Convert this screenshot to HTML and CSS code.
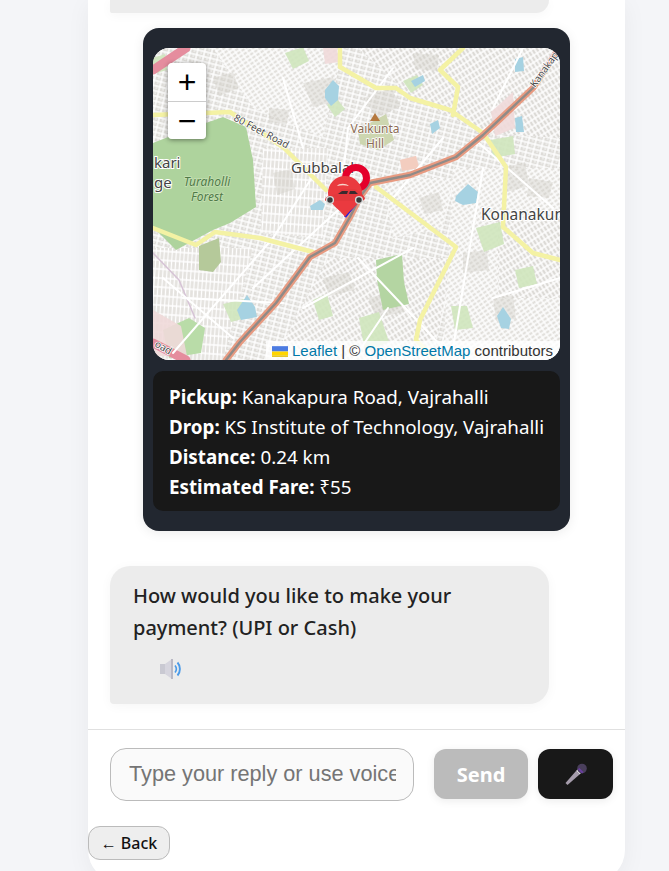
FILE: index.html
```html
<!DOCTYPE html>
<html lang="en">
<head>
<meta charset="utf-8">
<title>Ride booking chat</title>
<link rel="stylesheet" href="styles.css">
</head>
<body>
<main class="card">
  <section class="chat">
    <div class="bubble bubble-cut"></div>
    <div class="ride">
      <div class="map">
        <svg class="map-art" viewBox="0 0 407 312" width="407" height="312" aria-hidden="true">
          <defs>
            <pattern id="st1" width="7" height="5" patternUnits="userSpaceOnUse" patternTransform="rotate(14)">
              <rect width="7" height="5" fill="#dedcd8"/>
              <path d="M0 1H7M2 0V5" stroke="#fff" stroke-width="1.500"/>
              <path d="M5 3H7" stroke="#fff" stroke-width=".8"/>
            </pattern>
            <pattern id="st2" width="5" height="8" patternUnits="userSpaceOnUse" patternTransform="rotate(-34)">
              <rect width="5" height="8" fill="#e2e0dc"/>
              <path d="M0 2H5M1 0V8M0 6H5" stroke="#fff" stroke-width="1.400"/>
            </pattern>
            <pattern id="st3" width="6" height="4" patternUnits="userSpaceOnUse" patternTransform="rotate(58)">
              <rect width="6" height="4" fill="#dcdad6"/>
              <path d="M0 1H6M4 0V4" stroke="#fff" stroke-width="1.500"/>
            </pattern>
            <pattern id="st4" width="4" height="9" patternUnits="userSpaceOnUse" patternTransform="rotate(4)">
              <rect width="4" height="9" fill="#e4e2de"/>
              <path d="M0 4H4M1.500 0V9" stroke="#fff" stroke-width="1.300"/>
            </pattern>
            <filter id="soft"><feGaussianBlur stdDeviation="0.5"/></filter>
          </defs>
          <g filter="url(#soft)">
            <rect width="407" height="312" fill="url(#st1)"/>
            <path d="M0 0H190L170 90 100 60 60 0Z" fill="url(#st2)"/>
            <path d="M205 0H407V90L330 85 260 50Z" fill="url(#st3)"/>
            <path d="M175 210H300L280 312H120Z" fill="url(#st3)"/>
            <path d="M300 120H407V312H290Z" fill="url(#st2)"/>
            <path d="M0 200H100L70 312H0Z" fill="url(#st4)"/>
            <path d="M110 100H175L170 190 108 185Z" fill="url(#st4)"/>
            <path d="M345 170H407V250H345Z" fill="url(#st3)"/>
            <path d="M230 130H300L290 180 240 190Z" fill="url(#st2)"/>
            <g fill="#cfccc6" opacity=".4">
              <path d="M150 35l30-6 6 24-26 6zM210 50l28-10 10 18-24 12zM120 125l18-4 4 20-18 6zM350 120l22-6 4 24-22 6zM215 250l30-8 6 22-28 6zM310 205l24-3 2 20-26 3zM60 30l20-6 6 16-20 8zM340 250l20-3 3 24-20 2zM170 230l26-6 6 18-26 6zM260 5l26 2-2 16-22-2zM376 130l24 4-4 16-22-2zM116 60l20 2-2 14-18-2zM266 150l20-6 4 18-18 4z"/>
            </g>
            <g fill="#cfe6bd" opacity=".9">
              <path d="M132 5l18-6 6 14-16 8zM174 57l10-6 8 10-10 8zM250 33l14-6 6 10-12 8zM337 92l23-4 2 18-22 4zM323 180l24-6 4 22-20 8zM70 256l26-6 4 18-22 6zM206 270l20-6 10 30-24 10zM298 258l16 0 6 22-18 2zM160 252l14-6 6 22-14 4zM362 222l18-4 4 18-18 4zM0 10l12-4 2 16-14 4z"/>
            </g>
            <path d="M223 212l26-6 2 28 5 22-26 6-6-30z" fill="#b4d5a2"/>
            <path d="M10 282l26-12 16 10-4 25-32 5z" fill="#b9dca8"/>
            <path d="M46 198l20-8 2 24-8 10-14-2z" fill="#b5c99a"/>
            <path d="M205 82l28-16 8 26-16 10-18-6z" fill="#cdd6b0"/>
            <g fill="#efd9d9" opacity=".9"><path d="M170 0h14l2 14-14 2zM338 64l22-20 2 36-20 8zM247 112l16-4 4 12-18 3zM0 262l28 16 6 30-34 0z"/></g>
            <path d="M247 112l16-4 3 12-17 3z" fill="#f3cdbf"/>
            <path d="M0 95 33 82 70 69 93 79 100 112 103 159 77 175 60 182 23 202 0 179Z" fill="#aed39d"/>
            <g fill="#a6d2e2">
              <path d="M172 42l8-10 6 6-1 14-7 6-6-8zM303 148l12-12 10 8-2 11-13 2-8-4zM344 268l6-9 8 12-2 10-8-1zM84 262l10-15 8 12 2 10-16 3zM157 158l10-6 5 4-2 6-12 0zM362 11l8-2 1 14-9 1zM362 70l7-2 2 16-8 0zM258 33l12-6 2 6-10 6zM277 76l8-4 2 8-8 6z"/>
            </g>
            <g fill="none" stroke-linecap="round" stroke-linejoin="round">
              <path d="M0 22 33 0" stroke="#e58d9e" stroke-width="9"/>
              <path d="M0 295 33 312" stroke="#e58d9e" stroke-width="9"/>
              <path d="M0 205 26 232 42 270" stroke="#d6c3d6" stroke-width="1.500"/>
              <g stroke="#fff" stroke-width="2">
                <path d="M20 305 120 190 165 120M100 240 220 130M240 20 195 80 190 130M300 300 330 120M205 210 290 300M320 90 400 160M30 250 130 255M240 150 290 90M130 30 150 100M370 0 340 60M10 230 80 290M150 260 260 200M340 250 407 230M235 260 200 312"/>
              </g>
              <g stroke="#f4f2a4" stroke-width="4.500">
                <path d="M0 67 77 64 130 99 173 142"/>
                <path d="M223 139 303 199 267 272 263 292 283 312"/>
                <path d="M0 180 43 197 62 184 107 190 160 204"/>
                <path d="M187 0 187 19 223 40 243 40 257 50 297 62 330 85 353 119 350 179 380 205 407 212"/>
                <path d="M310 0 287 22 305 39 300 67"/>
              </g>
              <path d="M73 312 87 294 123 255 157 209 182 195 197 169 207 149 217 135 257 127 303 109 330 87 380 40 403 5" stroke="#e89a80" stroke-width="6.500"/>
              <path d="M73 312 87 294 123 255 157 209 182 195 197 169 207 149 217 135 257 127 303 109 330 87 380 40 392 24" stroke="#8f8b88" stroke-width="2.400"/>
            </g>
          </g>
          <g>
            <text x="1" y="120" class="l-town">kari</text>
            <text x="1" y="140" class="l-town">ge</text>
            <text x="138" y="125" class="l-town">Gubbalal</text>
            <text x="328" y="172" class="l-kona">Konanakun</text>
            <text x="222" y="85" class="l-hill" text-anchor="middle">Vaikunta</text>
            <text x="222" y="100" class="l-hill" text-anchor="middle">Hill</text>
            <path d="M222 65l5 8h-10z" fill="#b5793f"/>
            <text x="54" y="138" class="l-forest" text-anchor="middle">Turaholli</text>
            <text x="54" y="153" class="l-forest" text-anchor="middle">Forest</text>
            <text x="80" y="72" class="l-road" transform="rotate(28 80 72)">80 Feet Road</text>
            <text x="382" y="40" class="l-road" transform="rotate(-54 382 40)">Kanakap</text>
            <text x="1" y="298" class="l-road" transform="rotate(30 1 298)">oad</text>
          </g>
          <g>
            <circle cx="203" cy="130" r="10.500" fill="none" stroke="#e4002b" stroke-width="7"/>
            <path d="M192 169 203 155" fill="none" stroke="#1d1de0" stroke-width="2.500"/>
            <path d="M192 169C188 162 175 156 175 145a17 17 0 0 1 34 0C209 156 196 162 192 169Z" fill="#ea3a3f"/>
            <path d="M184 138c2-3 9-3 12 0-4-1-8-1-12 0z" fill="#f7d6cc"/>
            <path d="M172 152c0-3 4-5 12-6l5-5h12c4 1 6 3 8 5l3 4c0 2-2 3-4 3h-32c-3 0-4 0-4-1z" fill="#e3383c"/>
            <path d="M185 146l4-3h6l-1 3zM196 146l1-3h5l3 3z" fill="#3a2a2e"/>
            <circle cx="177" cy="152" r="3.400" fill="#3b3b3b" stroke="#d8d8d8" stroke-width="1.400"/>
            <circle cx="206" cy="152" r="3.400" fill="#3b3b3b" stroke="#d8d8d8" stroke-width="1.400"/>
          </g>
        </svg>
        <div class="zoom">
          <button class="zoom-btn" type="button">+</button>
          <button class="zoom-btn" type="button">−</button>
        </div>
        <div class="attribution">
          <svg class="flag" viewBox="0 0 12 8" width="16" height="11" aria-hidden="true"><rect width="12" height="4" fill="#4C7BE1"/><rect y="4" width="12" height="3" fill="#FFD500"/><rect y="7" width="12" height="1" fill="#E0BC00"/></svg>
          <a href="#">Leaflet</a> <span>|</span> © <a href="#">OpenStreetMap</a> contributors
        </div>
      </div>
      <div class="info">
        <p><b>Pickup:</b> Kanakapura Road, Vajrahalli</p>
        <p><b>Drop:</b> KS Institute of Technology, Vajrahalli</p>
        <p><b>Distance:</b> 0.24 km</p>
        <p><b>Estimated Fare:</b> ₹55</p>
      </div>
    </div>
    <div class="bubble">
      <p class="bubble-text">How would you like to make your payment? (UPI or Cash)</p>
      <svg class="speaker" viewBox="0 0 24 22" width="24" height="22" aria-hidden="true">
        <path d="M1 6h5v10H1z" fill="#c9c9d2"/>
        <path d="M6 6 13 1v20l-7-5z" fill="#d6d5de"/>
        <path d="M12 1h2v20h-2z" fill="#b9b8c4"/>
        <path d="M16 7.500c1.600 2 1.600 5 0 7" fill="none" stroke="#4a9ae8" stroke-width="1.600"/>
        <path d="M18.500 4.500c3.200 3.600 3.200 9.400 0 13" fill="none" stroke="#4a9ae8" stroke-width="1.900"/>
      </svg>
    </div>
  </section>
  <form class="composer">
    <input class="reply" type="text" placeholder="Type your reply or use voice">
    <button class="send" type="button">Send</button>
    <button class="mic" type="button" aria-label="Voice input">
      <svg viewBox="0 0 24 24" width="24" height="24" aria-hidden="true">
        <path d="M1.500 21 12 9l3.500 3.500L3.500 23z" fill="#a59cab"/>
        <path d="M12 9l3.500 3.500 1.800-1.800-3.500-3.500z" fill="#ded9e2"/>
        <circle cx="18" cy="6.500" r="4.800" fill="#4a3f5c"/>
        <path d="M13.900 7.300l1.400-1.400 4.200 4.200-1.400 1.300z" fill="#6a3fa0"/>
      </svg>
    </button>
  </form>
  <button class="back" type="button">← Back</button>
</main>
</body>
</html>
```
FILE: styles.css
```css
* { box-sizing: border-box; }
html, body { margin: 0; height: 871px; overflow: hidden; }
body { background: #f4f5f8; font-family: "Noto Sans", "Open Sans", sans-serif; }
.card {
  width: 537px;
  height: 882px;
  margin-left: 88px;
  background: #fff;
  border-radius: 0 0 32px 32px;
  box-shadow: 0 4px 24px rgba(0, 0, 0, .05);
  display: flex;
  flex-direction: column;
}
.chat { display: flex; flex-direction: column; height: 730px; flex: none; padding: 0 22px; border-bottom: 1px solid #e0e0e0; }
.bubble {
  width: 439px;
  height: 138px;
  margin-top: 35px;
  padding: 13.500px 23px;
  background: #ececec;
  color: #222;
  border-radius: 20px 20px 20px 4px;
  box-shadow: 0 2px 12px rgba(0, 0, 0, .04);
}
.bubble-cut { height: 13px; margin-top: 0; padding: 0; border-radius: 0 0 20px 4px; }
.bubble-text { margin: 0; font-size: 20px; line-height: 32.500px; font-weight: 500; }
.speaker { display: block; margin: 13px 0 0 26px; }
.ride {
  width: 427px;
  height: 503px;
  margin: 15px 0 0 33px;
  padding: 20px 10px;
  background: #222730;
  border-radius: 16px;
  box-shadow: 0 2px 12px rgba(0, 0, 0, .08);
}
.map { position: relative; height: 312px; border-radius: 16px; overflow: hidden; background: #e9e7e3; }
.map-art { display: block; }
.l-town { font: 15px "Noto Sans", sans-serif; fill: #444; stroke: #fff; stroke-width: 2px; paint-order: stroke; }
.l-kona { font: 15.500px "Noto Sans", sans-serif; fill: #444; stroke: #fff; stroke-width: 2px; paint-order: stroke; }
.l-hill { font: 12px "Noto Sans", sans-serif; fill: #8a6a52; stroke: #fff; stroke-width: 1.500px; paint-order: stroke; }
.l-forest { font: italic 12px "Noto Sans", sans-serif; fill: #4f7a48; stroke: #c6e0b4; stroke-width: 1.500px; paint-order: stroke; }
.l-road { font: 10px "Noto Sans", sans-serif; fill: #4a4a4a; stroke: #fff; stroke-width: 1.500px; paint-order: stroke; }
.zoom {
  position: absolute;
  top: 15px;
  left: 15px;
  width: 38px;
  display: flex;
  flex-direction: column;
  border-radius: 4px;
  overflow: hidden;
  box-shadow: 0 1px 5px rgba(0, 0, 0, .45);
}
.zoom-btn {
  width: 38px;
  height: 38px;
  padding: 0;
  border: 0;
  background: #fff;
  color: #000;
  font: 32px/36px "Liberation Sans", sans-serif;
}
.zoom-btn + .zoom-btn { border-top: 1px solid #ccc; }
.attribution {
  position: absolute;
  right: 0;
  bottom: 0;
  height: 19px;
  padding: 0 7px 0 6px;
  background: rgba(255, 255, 255, .8);
  color: #333;
  font: 15px/19px "Liberation Sans", sans-serif;
  white-space: nowrap;
}
.attribution a { color: #0078a8; text-decoration: none; }
.flag { display: inline-block; vertical-align: -1px; }
.info {
  height: 140px;
  margin-top: 11px;
  padding: 11px 16px;
  background: #181818;
  color: #fff;
  border-radius: 10px;
  font-size: 18.800px;
  line-height: 30px;
}
.info p { margin: 0; white-space: nowrap; }
.composer { display: flex; align-items: center; height: 88px; padding: 0 12px 0 22px; flex: none; }
.reply {
  width: 304px;
  height: 53px;
  padding: 0 17px 0 18px;
  border: 1px solid #bbb;
  border-radius: 16px;
  background: #fafafa;
  font: 21.700px "Liberation Sans", sans-serif;
  outline: 0;
}
.reply::placeholder { color: #757575; }
.send, .mic {
  height: 50px;
  border: 0;
  border-radius: 12px;
  box-shadow: 0 2px 8px rgba(0, 0, 0, .08);
}
.send {
  width: 94px;
  margin-left: 20px;
  background: #bbb;
  color: #fff;
  font: 700 20px "Noto Sans", sans-serif;
}
.mic {
  width: 75px;
  margin-left: 10px;
  padding: 0;
  background: #181818;
  display: flex;
  align-items: center;
  justify-content: center;
}
.back {
  align-self: flex-start;
  width: 82px;
  height: 34px;
  margin-top: 8px;
  padding: 0;
  border: 1px solid #bbb;
  border-radius: 12px;
  background: #eee;
  color: #111;
  font: 500 16px "Noto Sans", sans-serif;
}
```
